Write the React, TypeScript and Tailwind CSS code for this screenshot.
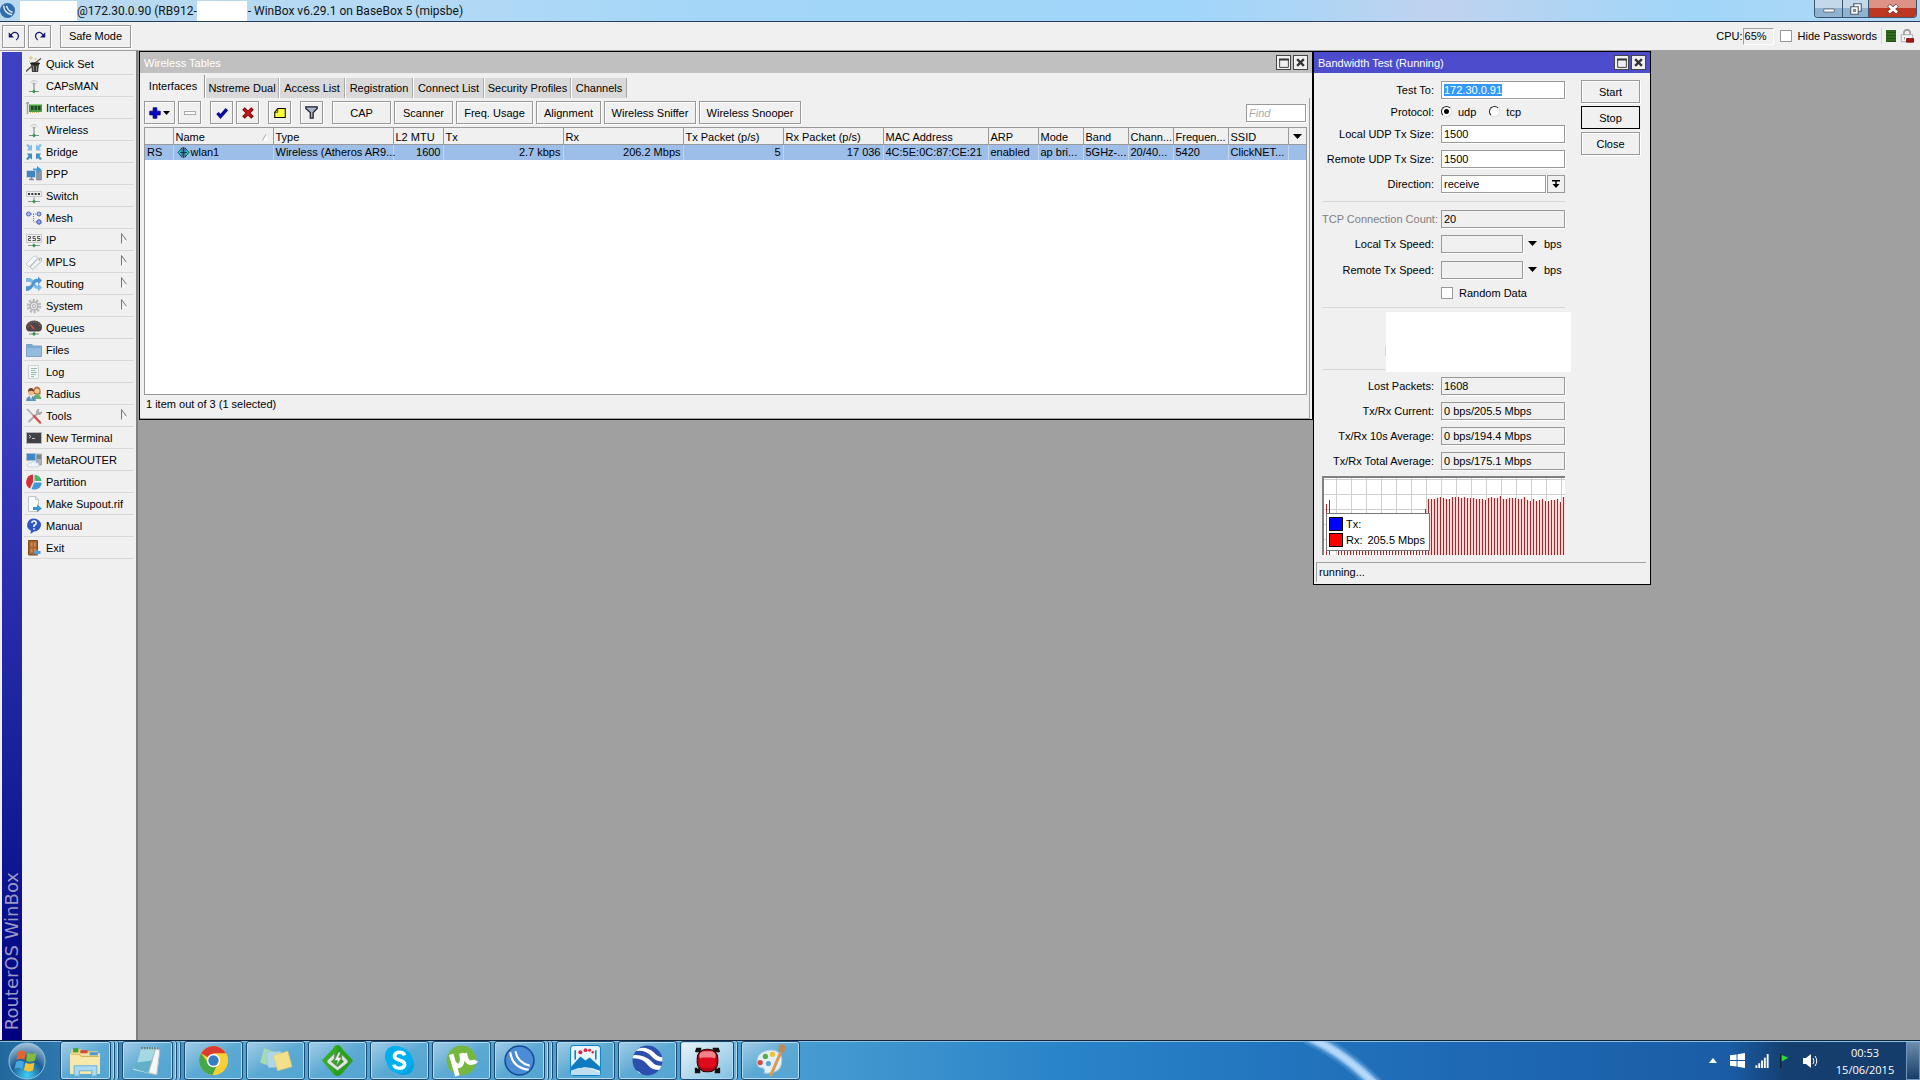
import React, { useEffect, useRef } from 'react';

interface MenuItem {
  label: string;
  icon: React.ReactNode;
  submenu?: boolean;
}

interface Column {
  title: string;
  value: React.ReactNode;
  width: string;
  right?: boolean;
}

const Icon: React.FC<{ children: React.ReactNode; className?: string }> = ({ children, className = 'size-4' }) => (
  <svg viewBox="0 0 16 16" className={`${className} shrink-0`} fill="none" aria-hidden="true">
    {children}
  </svg>
);

const antenna = (
  <Icon>
    <path d="M4.5 4.5Q8 .5 11.5 4.5M6 6Q8 4 10 6" stroke="#c2c5c4" />
    <path d="M8 5v8" stroke="#9a9f9c" strokeWidth="1.4" />
    <path d="M3 13.5h10" stroke="#7d8a80" />
    <path d="M6 13.5 8 11.5l2 2-2 2z" fill="#2e9a48" />
  </Icon>
);

const menuItems: MenuItem[] = [
  {
    label: 'Quick Set',
    icon: (
      <Icon>
        <path d="M5 8h8l-1 8H6z" fill="#3b3b3b" />
        <ellipse cx="9" cy="7.5" rx="5" ry="1.3" fill="#1e1e1e" />
        <path d="M7.5 10v5M10.500 10v5" stroke="#8a8a8a" />
        <path d="M0 15.500 7 9M9 7l6-4.500" stroke="#5b544a" strokeWidth="1.5" />
        <path d="M5 0v4M3 2h4M9.5 2v2M8.5 3h2M3 5.5h1.5" stroke="#e3c070" />
      </Icon>
    ),
  },
  { label: 'CAPsMAN', icon: antenna },
  {
    label: 'Interfaces',
    icon: (
      <Icon>
        <path d="M1.500 2v12M0 3h3" stroke="#9ba39b" strokeWidth="1.5" />
        <path d="M3 4h13v8H3z" fill="#4c9b45" />
        <path d="M5 6h2.500v4H5zM8.500 6H11v4H8.500zM12 6h2.500v4H12z" fill="#1f4a23" />
        <path d="M4 12.5h9" stroke="#c7b45c" strokeDasharray="1 1" />
        <path d="M3 4.5h13" stroke="#8fd085" />
      </Icon>
    ),
  },
  { label: 'Wireless', icon: antenna },
  {
    label: 'Bridge',
    icon: (
      <Icon>
        <path d="M0 1l2-1 2 2 2-1.500V6.500H1L2.500 4z" fill="#7cc0e4" />
        <path d="M16 1l-2-1-2 2-2-1.500V6.500h5L13.500 4z" fill="#7cc0e4" />
        <path d="M0 15l2 1 2-2 2 1.500V9.500H1L2.500 12z" fill="#3f8fc0" />
        <path d="M16 15l-2 1-2-2-2 1.500V9.500h5L13.500 12z" fill="#3f8fc0" />
      </Icon>
    ),
  },
  {
    label: 'PPP',
    icon: (
      <Icon>
        <path d="M10.500 4.500h5v9.500h-5z" fill="#8b98a3" stroke="#66727c" strokeWidth=".5" />
        <path d="M.5 4.500h9v7h-9z" fill="#3b86c6" stroke="#c7d2da" />
        <path d="M3 13.500h5M5.500 11v2" stroke="#7f8a92" strokeWidth="1.5" />
        <path d="M7 4V2.500h4V0l4.500 3.500L11 7V4.500z" fill="#3a9bdc" />
      </Icon>
    ),
  },
  {
    label: 'Switch',
    icon: (
      <Icon>
        <path d="M.5 3.5h15v5H.5z" fill="#efefef" stroke="#c9c9c9" />
        <path d="M2 6h12" stroke="#333" strokeWidth="2" strokeDasharray="2 1.3" />
        <path d="M2 13.5h12M8 9v3" stroke="#8d9a90" />
        <path d="M6 13.5 8 11.5l2 2-2 2z" fill="#2e9a48" />
      </Icon>
    ),
  },
  {
    label: 'Mesh',
    icon: (
      <Icon>
        <path d="M5 4h5M7.500 4v8H11" stroke="#777" strokeDasharray="1 1" />
        <circle cx="2.5" cy="4" r="2" fill="#aebcf0" stroke="#5064b4" />
        <circle cx="13" cy="4" r="2" fill="#aebcf0" stroke="#5064b4" />
        <circle cx="13" cy="12" r="2.2" fill="#8ea2ea" stroke="#3d50a4" />
      </Icon>
    ),
  },
  {
    label: 'IP',
    submenu: true,
    icon: (
      <Icon>
        <path d="M.5 2.5h15v8H.5z" fill="#eee" stroke="#c9c9c9" />
        <path d="M2 4.5h2.500v2H2.500v2h2.500M9.500 4.5H7v2h2.500v2H6.500M14 4.5h-2.500v2H14v2h-3" stroke="#555" />
        <path d="M2 13.5h12" stroke="#8d9a90" />
        <path d="M6 13.5 8 11.5l2 2-2 2z" fill="#2e9a48" />
      </Icon>
    ),
  },
  {
    label: 'MPLS',
    submenu: true,
    icon: (
      <Icon>
        <path d="M0 10 8 2h3v3l-8 8z" fill="#f6f8f8" stroke="#c4cdcf" />
        <path d="M4 13 12 4.500l3.500-.5v3L7 15.500z" fill="#edf2f2" stroke="#aebabc" />
        <circle cx="13.5" cy="6" r=".8" fill="#7e8f94" />
      </Icon>
    ),
  },
  {
    label: 'Routing',
    submenu: true,
    icon: (
      <Icon>
        <path d="M0 2h4q3 1 5 5 1 3 3 3V7.500l4 4-4 4V13q-4 0-6-5Q5 5 0 6z" fill="#79b9e6" />
        <path d="M0 10q4 1 6-3 2-5 6-4V.5l4 4-4 4V6Q9 6 8 9q-3 6-8 6z" fill="#4f95d3" />
      </Icon>
    ),
  },
  {
    label: 'System',
    submenu: true,
    icon: (
      <Icon>
        <circle cx="8" cy="8" r="5.8" stroke="#bcbcbc" strokeWidth="3" strokeDasharray="2.2 1.4" />
        <circle cx="8" cy="8" r="4" fill="#e2e2e2" stroke="#b0b0b0" strokeWidth="1.5" />
        <circle cx="8" cy="8" r="1.5" fill="#fff" stroke="#aaa" />
      </Icon>
    ),
  },
  {
    label: 'Queues',
    icon: (
      <Icon>
        <path d="M0 7a8 6.500 0 0 1 16 0q0 4-3 4.500H3Q0 11 0 7z" fill="#4e4646" />
        <path d="M2 7a6 5 0 0 1 12 0" stroke="#9b8f8f" strokeDasharray="1 1.5" />
        <path d="m8 9-3.500-4" stroke="#e4523e" strokeWidth="1.5" />
        <path d="M3 14h10M8 11v2" stroke="#7d8a80" />
        <path d="M6 14l2-2 2 2-2 2z" fill="#2e9a48" />
      </Icon>
    ),
  },
  {
    label: 'Files',
    icon: (
      <Icon>
        <path d="M.5 2.500H6l1.500 1.500h8v10.500H.5z" fill="#7fa9cd" stroke="#7ba3c6" />
        <path d="M1 6h14v8H1z" fill="#92bbdc" />
      </Icon>
    ),
  },
  {
    label: 'Log',
    icon: (
      <Icon>
        <path d="M2.500 1.500h10v13h-10z" fill="#f1f6f4" stroke="#cbd6d3" />
        <path d="M5 4.500h6M5 6.500h4M5 8.500h6M5 10.500h5M5 12.500h3" stroke="#9fb6b2" />
      </Icon>
    ),
  },
  {
    label: 'Radius',
    icon: (
      <Icon>
        <path d="M7 8q-.5-7 4-7.500 4.500.5 3.500 8z" fill="#bb6a2c" />
        <circle cx="11" cy="5" r="2.5" fill="#f2c59b" />
        <path d="M7 13q1-5 4-5t4.500 5z" fill="#68ad69" />
        <circle cx="5" cy="6.500" r="3" fill="#eab98b" />
        <path d="M2 6q0-4 3-4t3 4Q5 3.500 2 6z" fill="#6b4123" />
        <path d="M0 15q.5-5 5-5t5 5z" fill="#5b93bb" />
        <path d="M4 10h2l-1 4z" fill="#fff" />
      </Icon>
    ),
  },
  {
    label: 'Tools',
    submenu: true,
    icon: (
      <Icon>
        <path d="M2.500 14 12 5" stroke="#b0b0b0" strokeWidth="2" />
        <path d="M10.500 5.500a3 3 0 0 1 3-4.500l-1 2.500 1.500 1 2-1.500a3 3 0 0 1-5 3z" fill="#a8a8a8" />
        <path d="M1 1l7 7" stroke="#a9a9a9" strokeWidth="1.5" />
        <path d="m8 8 6 6.500" stroke="#d25050" strokeWidth="2.5" strokeLinecap="round" />
      </Icon>
    ),
  },
  {
    label: 'New Terminal',
    icon: (
      <Icon>
        <path d="M.5 2.500h15v11H.5z" fill="#3f4146" stroke="#b5b5b8" />
        <path d="m3 5 2 1.500L3 8M6 8.500h3" stroke="#e5e5e5" strokeWidth=".8" />
      </Icon>
    ),
  },
  {
    label: 'MetaROUTER',
    icon: (
      <Icon>
        <path d="M10.500 2h5v11h-5z" fill="#a9b3bb" stroke="#7c8993" strokeWidth=".6" />
        <path d="M11 4h4M11 6h4" stroke="#4b565f" />
        <path d="M.5 1.500h9v7h-9z" fill="#3c88cb" stroke="#a9bccb" />
        <path
          d="M3 15Q.5 14.500 1.500 12 3 10 5 11q2-3 4.500-.5 3.500 0 3.500 2.500 0 2-2 2z"
          fill="#eef3f8"
          stroke="#b8c6d2"
          strokeWidth=".7"
        />
      </Icon>
    ),
  },
  {
    label: 'Partition',
    icon: (
      <Icon>
        <path d="M7 8 4 14.500A7.500 7.500 0 0 1 7 .5z" fill="#d4303c" />
        <path d="M8.500 7V.8A7.200 7.200 0 0 1 15.500 7z" fill="#4bb36d" />
        <path d="M8.200 8.500h7.500A7.300 7.300 0 0 1 5.500 15z" fill="#3f97d6" />
      </Icon>
    ),
  },
  {
    label: 'Make Supout.rif',
    icon: (
      <Icon>
        <path d="M2.500.5h7l3 3v12h-10z" fill="#f8fbfa" stroke="#bcc8c5" />
        <path d="M9.500.5v3h3" stroke="#bcc8c5" />
        <path d="M7 11h4V8.500l5 4-5 3.500V14H7z" fill="#3b95d3" />
      </Icon>
    ),
  },
  {
    label: 'Manual',
    icon: (
      <Icon>
        <path d="M8 .5a7 6.500 0 0 1 0 13l-3.500 2.500.5-3.200A7 6.500 0 0 1 8 .5z" fill="#3058c4" />
        <path d="M5.800 5q.2-2 2.200-2t2.200 2Q10.200 6.300 8 7.500V9M8 10.200v1.600" stroke="#fff" strokeWidth="1.5" />
      </Icon>
    ),
  },
  {
    label: 'Exit',
    icon: (
      <Icon>
        <path d="M2.500.5h9v14.500h-9z" fill="#a8622d" stroke="#7d4a22" />
        <path d="M4.500 2.500h2v4h-2zM7.800 2.500h2v4h-2zM4.500 8.500h2v4h-2zM7.800 8.500h2v4h-2z" fill="#cd8a4e" />
        <path d="M14.500 11h-3V9L7.500 12.500l4 3V14h3z" fill="#4a9fdc" />
      </Icon>
    ),
  },
];

const tabs = [
  { label: 'Interfaces', width: 'w-[63px]' },
  { label: 'Nstreme Dual', width: 'w-[74px]' },
  { label: 'Access List', width: 'w-[66px]' },
  { label: 'Registration', width: 'w-[68px]' },
  { label: 'Connect List', width: 'w-[71px]' },
  { label: 'Security Profiles', width: 'w-[87px]' },
  { label: 'Channels', width: 'w-[56px]' },
];

const toolButtons = [
  { label: 'CAP', width: 'w-[59px]' },
  { label: 'Scanner', width: 'w-[59px]' },
  { label: 'Freq. Usage', width: 'w-[77px]' },
  { label: 'Alignment', width: 'w-[65px]' },
  { label: 'Wireless Sniffer', width: 'w-[92px]' },
  { label: 'Wireless Snooper', width: 'w-[102px]' },
];

const columns: Column[] = [
  { title: '', value: 'RS', width: 'w-[28px]' },
  {
    title: 'Name',
    width: 'w-[100px]',
    value: (
      <span className="flex items-center gap-px pl-px">
        <Icon className="h-[11px] w-[13px]">
          <path d="M0 8l6-7v14zM16 8l-6-7v14z" fill="#22d3dc" stroke="#0a2a3a" strokeWidth="1.2" />
          <path d="M8 0v16" stroke="#0a2a3a" strokeWidth="1.2" />
          <path d="M3 8h10" stroke="#0a2a3a" strokeWidth="1.2" />
        </Icon>
        wlan1
      </span>
    ),
  },
  { title: 'Type', value: 'Wireless (Atheros AR9...', width: 'w-[120px]' },
  { title: 'L2 MTU', value: '1600', width: 'w-[50px]', right: true },
  { title: 'Tx', value: '2.7 kbps', width: 'w-[120px]', right: true },
  { title: 'Rx', value: '206.2 Mbps', width: 'w-[120px]', right: true },
  { title: 'Tx Packet (p/s)', value: '5', width: 'w-[100px]', right: true },
  { title: 'Rx Packet (p/s)', value: '17 036', width: 'w-[100px]', right: true },
  { title: 'MAC Address', value: '4C:5E:0C:87:CE:21', width: 'w-[105px]' },
  { title: 'ARP', value: 'enabled', width: 'w-[50px]' },
  { title: 'Mode', value: 'ap bri...', width: 'w-[45px]' },
  { title: 'Band', value: '5GHz-...', width: 'w-[45px]' },
  { title: 'Chann...', value: '20/40...', width: 'w-[45px]' },
  { title: 'Frequen...', value: '5420', width: 'w-[55px]' },
  { title: 'SSID', value: 'ClickNET...', width: 'w-[60px]' },
];

const results = [
  { id: 'lost', label: 'Lost Packets:', value: '1608' },
  { id: 'current', label: 'Tx/Rx Current:', value: '0 bps/205.5 Mbps' },
  { id: 'avg10', label: 'Tx/Rx 10s Average:', value: '0 bps/194.4 Mbps' },
  { id: 'total', label: 'Tx/Rx Total Average:', value: '0 bps/175.1 Mbps' },
];

// Rx samples, top edge of each bar in the plot
const rxTops = [
  21, 21, 21, 20, 19, 20, 21, 21, 19, 19, 19, 20, 19, 20, 20, 20, 21, 21, 21, 22, 20, 19, 20, 20, 18, 21, 21, 20, 20,
  20, 21, 21, 19, 22, 23, 21, 23, 22, 21, 23, 23, 22, 22, 21, 24, 19,
];

const buttonStyle =
  'flex h-[23px] items-center justify-center whitespace-nowrap border border-[#999] bg-[#f0f0f0] shadow-[inset_1px_1px_0_#fff,1px_1px_0_#fff]';
const fieldStyle = 'h-[18px] min-w-0 border border-[#999] bg-white px-[2px] outline-none shadow-[1px_1px_0_#fff]';
const disabledField = 'h-[18px] min-w-0 border border-[#999] bg-[#f0f0f0] px-[2px] outline-none shadow-[1px_1px_0_#fff]';

const WindowButtons: React.FC = () => (
  <div className="flex gap-[2px]">
    <button
      aria-label="Maximize"
      className="flex size-[15px] items-center justify-center border border-[#444] bg-[#f0f0f0]"
    >
      <Icon className="size-[10px]">
        <path d="M1 2h14v13H1z" stroke="#444" strokeWidth="1.6" />
        <path d="M0 2.500h16" stroke="#333" strokeWidth="3" />
      </Icon>
    </button>
    <button
      aria-label="Close window"
      className="flex size-[15px] items-center justify-center border border-[#444] bg-[#f0f0f0]"
    >
      <Icon className="size-[9px]">
        <path d="m2 2 12 12M14 2 2 14" stroke="#333" strokeWidth="4" />
      </Icon>
    </button>
  </div>
);

const Down: React.FC = () => (
  <svg viewBox="0 0 9 5" className="h-[5px] w-[9px]" aria-hidden="true">
    <path d="M0 0h9L4.500 5z" fill="#000" />
  </svg>
);

const TitleBar: React.FC = () => (
  <header className="flex h-[22px] shrink-0 border-b border-[#26405c] bg-[linear-gradient(90deg,#b9d9ee_0,#b5daf4_20%,#a3d6f8_38%,#a0d6fa_62%,#bfd3ef_75%,#a0d6f8_88%,#b4d8f4)] font-['Roboto','Noto_Sans',sans-serif] text-xs text-[#101418]">
    <Icon className="mt-[3px] size-[15px]">
      <circle cx="8" cy="8" r="8" fill="#2f6cab" />
      <path d="M4 3q0 8 9 9.500M7 3q1 5 6.500 7" stroke="#e3effa" strokeWidth="1.5" />
    </Icon>
    <span className="ml-[5px] mt-px w-[57px] bg-white" />
    <span className="whitespace-nowrap leading-[22px]">@172.30.0.90 (RB912-</span>
    <span className="mt-px h-[20px] w-[50px] bg-white" />
    <h1 className="ml-px whitespace-nowrap leading-[22px]">- WinBox v6.29.1 on BaseBox 5 (mipsbe)</h1>
    <div className="ml-auto mr-[3px] flex h-[18px] overflow-hidden rounded-b border border-t-0 border-[#3c536e]">
      <button
        aria-label="Minimize"
        className="flex w-[28px] items-center justify-center border-r border-[#3c536e] bg-linear-to-b from-[#c3d8e9] from-50% to-[#8fb2cf] to-50%"
      >
        <Icon className="size-3">
          <path d="M1 8h14v4H1z" fill="#fff" stroke="#4b5a69" />
        </Icon>
      </button>
      <button
        aria-label="Restore"
        className="flex w-[26px] items-center justify-center border-r border-[#3c536e] bg-linear-to-b from-[#c3d8e9] from-50% to-[#8fb2cf] to-50%"
      >
        <Icon className="size-3">
          <path d="M5 1h10v10H5z" stroke="#4b5a69" strokeWidth="1.5" fill="#fff" />
          <path d="M1 5h10v10H1z" fill="#fff" stroke="#4b5a69" strokeWidth="1.5" />
          <path d="M4.500 8.500h3v3h-3z" stroke="#4b5a69" fill="#9ab7cf" />
        </Icon>
      </button>
      <button
        aria-label="Close"
        className="flex w-[47px] items-center justify-center bg-linear-to-b from-[#dd9285] from-50% to-[#bd3722] to-50%"
      >
        <Icon className="size-3">
          <path d="m2 3 12 10M14 3 2 13" stroke="#5b3a3a" strokeWidth="5.5" />
          <path d="m2.500 3.500 11 9M13.500 3.500l-11 9" stroke="#fff" strokeWidth="3.5" />
        </Icon>
      </button>
    </div>
  </header>
);

const Toolbar: React.FC = () => (
  <div className="flex h-[28px] shrink-0 items-center bg-[#f0f0f0] px-[2px]">
    <button aria-label="Undo" className={`${buttonStyle} w-[23px]`}>
      <Icon className="size-3">
        <path d="M4 6.500Q8 1 12.500 4.500 16 9 11 13.500" stroke="#15156c" strokeWidth="1.6" />
        <path d="M1 3v7h7z" fill="#15156c" />
      </Icon>
    </button>
    <button aria-label="Redo" className={`${buttonStyle} ml-[3px] w-[23px]`}>
      <Icon className="size-3">
        <path d="M12 6.500Q8 1 3.500 4.500 0 9 5 13.500" stroke="#15156c" strokeWidth="1.6" />
        <path d="M15 3v7H8z" fill="#15156c" />
      </Icon>
    </button>
    <button className={`${buttonStyle} ml-[9px] w-[71px]`}>Safe Mode</button>
    <span className="ml-auto">CPU:</span>
    <span className="mr-[6px] h-[17px] w-[31px] border border-[#a0a0a0] border-r-white border-b-white pl-px leading-[15px]">
      65%
    </span>
    <input id="hide" type="checkbox" className="size-3 appearance-none border border-[#999] bg-white" />
    <label htmlFor="hide" className="ml-[6px]">
      Hide Passwords
    </label>
    <span className="ml-[4px] mr-[4px] h-4 w-px bg-[#d5d5d5]" />
    <span className="h-3 w-[10px] bg-[repeating-linear-gradient(#2f6a1c_0_2px,#235512_2px_3px)]" />
    <Icon className="ml-[4px] mr-[4px] size-[14px]">
      <path d="M4.500 7V4q0-3 3.500-3t3.500 3v3" stroke="#9a9a9a" strokeWidth="1.8" />
      <path d="M1.500 6.500h13v8h-13z" fill="#f5f5f5" stroke="#a5a5a5" />
      <path d="M4.500 9h1v3h-1z" fill="#888" />
      <path d="M7.500 11h8v4h-8z" fill="#b21616" stroke="#700" />
    </Icon>
  </div>
);

const Sidebar: React.FC = () => (
  <aside className="flex w-[138px] shrink-0 border-t border-r-2 border-t-[#a0a0a0] border-r-[#808080] bg-[#f0f0f0] pl-[2px] pt-px">
    <div className="flex w-5 items-end justify-center bg-linear-to-b from-[#4040c4] from-30% to-[#000080]">
      <span className="mb-[10px] rotate-180 whitespace-nowrap font-['DejaVu_Sans',sans-serif] text-lg leading-5 text-[#9a9ac4] [writing-mode:vertical-rl]">
        RouterOS WinBox
      </span>
    </div>
    <nav className="flex flex-1 flex-col px-[2px] pt-px">
      {menuItems.map((item) => (
        <button
          key={item.label}
          className="flex h-[22px] items-center gap-[4px] border-b border-[#d8d8d8] pl-[2px] pr-[7px] text-left"
        >
          {item.icon}
          <span className="flex-1 whitespace-nowrap">{item.label}</span>
          {item.submenu && (
            <svg viewBox="0 0 6 11" className="mb-[3px] h-[11px] w-[6px]" aria-hidden="true">
              <path d="M.5 11V.5L5.500 7.500" stroke="#777" fill="none" />
              <path d="M5.500 7.500.5 10.500" stroke="#fff" />
            </svg>
          )}
        </button>
      ))}
    </nav>
  </aside>
);

const WirelessTables: React.FC = () => (
  <section className="absolute left-px top-px flex h-[369px] w-[1174px] flex-col border border-black bg-[#f0f0f0]">
    <div className="flex h-[21px] shrink-0 items-center justify-between bg-[#c0c0c0] px-[4px] text-white">
      <h2>Wireless Tables</h2>
      <WindowButtons />
    </div>
    <div className="flex h-[25px] shrink-0 items-end px-[2px]">
      {tabs.map((tab, i) => (
        <button
          key={tab.label}
          className={`${tab.width} whitespace-nowrap ${
            i === 0 ? 'h-[23px] border-r border-[#999] pb-px' : 'h-5 border-l border-r border-r-[#aaa] border-l-white bg-[#d9d9d9]'
          }`}
        >
          {tab.label}
        </button>
      ))}
    </div>
    <div className="mr-[2px] flex flex-1 flex-col border-r border-b border-[#a0a0a0] pl-[4px] pr-[2px]">
      <div className="flex h-[29px] shrink-0 items-center gap-[3px]">
        <button aria-label="Add" className={`${buttonStyle} w-[31px] gap-[2px]`}>
          <Icon className="size-3">
            <path d="M5.500 1h5v4.500H15v5h-4.500V15h-5v-4.500H1v-5h4.500z" fill="#0808c8" stroke="#000050" />
          </Icon>
          <svg viewBox="0 0 7 4" className="h-1 w-[7px]" aria-hidden="true">
            <path d="M0 0h7L3.500 4z" fill="#000" />
          </svg>
        </button>
        <button aria-label="Remove" className={`${buttonStyle} w-[23px]`}>
          <span className="h-1 w-3 border border-[#aaa] bg-white" />
        </button>
        <button aria-label="Enable" className={`${buttonStyle} ml-[6px] w-[23px]`}>
          <Icon className="size-3">
            <path d="m2 8 4 4.500L14.500 3" stroke="#0a0a9c" strokeWidth="4.5" />
          </Icon>
        </button>
        <button aria-label="Disable" className={`${buttonStyle} w-[23px]`}>
          <Icon className="size-3">
            <path d="m2 2 12 12M14 2 2 14" stroke="#6c0808" strokeWidth="5" />
            <path d="m3 3 10 10M13 3 3 13" stroke="#c81414" strokeWidth="3" />
          </Icon>
        </button>
        <button aria-label="Comment" className={`${buttonStyle} ml-[6px] w-[23px]`}>
          <Icon className="h-3 w-[14px]">
            <path d="M1 7l4-5h10v12H1z" fill="#ffff3c" stroke="#000" strokeWidth="1.4" />
            <path d="M1 7h4V3" stroke="#000" />
          </Icon>
        </button>
        <button aria-label="Filter" className={`${buttonStyle} ml-[6px] w-[23px]`}>
          <Icon className="size-[13px]">
            <path d="M1 1h14v2L10 8v7H6.500V8L1 3z" fill="#a8b4cc" stroke="#1b1b26" strokeWidth="1.5" />
          </Icon>
        </button>
        {toolButtons.map((btn, i) => (
          <button key={btn.label} className={`${buttonStyle} ${btn.width} ${i === 0 ? 'ml-[6px]' : ''}`}>
            {btn.label}
          </button>
        ))}
        <input
          aria-label="Find"
          placeholder="Find"
          className={`${fieldStyle} ml-auto mr-px w-[60px] italic placeholder:text-[#aaa]`}
        />
      </div>
      <div className="flex-1 border border-[#999] bg-white">
        <table className="w-full table-fixed border-collapse whitespace-nowrap">
          <thead>
            <tr className="bg-[#f0f0f0] text-left">
              {columns.map((col) => (
                <th
                  key={col.title}
                  className={`${col.width} border-r border-b border-[#999] px-[2px] pt-[3px] font-normal leading-[13px]`}
                >
                  {col.title === 'Name' ? (
                    <span className="flex items-center justify-between">
                      Name
                      <Icon className="mr-[2px] size-[7px]">
                        <path d="M1 15 9 1l6 14z" fill="#fff" />
                        <path d="M1 15 9 1" stroke="#999" strokeWidth="2" />
                      </Icon>
                    </span>
                  ) : (
                    col.title
                  )}
                </th>
              ))}
              <th className="border-b border-[#999] pl-[4px]">
                <button aria-label="Choose columns" className="block">
                  <Down />
                </button>
              </th>
            </tr>
          </thead>
          <tbody>
            <tr className="bg-[#9dbee8]">
              {columns.map((col) => (
                <td
                  key={col.title}
                  className={`border-r border-[#c5d6ec] px-[2px] leading-[15px] ${col.right ? 'text-right' : 'text-left'}`}
                >
                  {col.value}
                </td>
              ))}
              <td />
            </tr>
          </tbody>
        </table>
      </div>
      <p className="h-[23px] shrink-0 pl-[2px] leading-[18px]">1 item out of 3 (1 selected)</p>
    </div>
  </section>
);

const Row: React.FC<{
  label: string;
  id?: string;
  dim?: boolean;
  className?: string;
  children: React.ReactNode;
}> = ({ label, id, dim, className = 'h-[25px]', children }) => (
  <div className={`flex items-center ${className}`}>
    <label
      htmlFor={id}
      className={`w-[112px] shrink-0 whitespace-nowrap text-right ${dim ? 'text-[#808080]' : ''}`}
    >
      {label}
    </label>
    <div className="ml-[7px] flex flex-1 items-center">{children}</div>
  </div>
);

const TrafficChart: React.FC = () => (
  <div className="relative mt-[3px] h-[79px] border-t-2 border-l-2 border-[#808080] bg-white">
    <svg
      viewBox="0 0 241 77"
      preserveAspectRatio="none"
      className="h-full w-full"
      shapeRendering="crispEdges"
      aria-label="Traffic"
    >
      {Array.from({ length: 16 }, (_, i) => (
        <path key={`v${i}`} d={`M${12.5 + i * 15} 0V77`} stroke="#cfcfcf" />
      ))}
      {Array.from({ length: 5 }, (_, i) => (
        <path key={`h${i}`} d={`M0 ${1.5 + i * 15}H241`} stroke="#cfcfcf" />
      ))}
      <path d="M2.500 26V77M5.500 22V77M101.500 31V77" stroke="#a02828" />
      {Array.from({ length: 29 }, (_, i) => (
        <path key={`b${i}`} d={`M${14.5 + i * 3} 72V77`} stroke="#a02828" />
      ))}
      {rxTops.map((top, i) => (
        <g key={i}>
          <rect x={103 + i * 3} y={top} width="3" height={77 - top} fill="#fbdada" />
          <path d={`M${104.5 + i * 3} ${top}V77`} stroke="#a02828" />
        </g>
      ))}
    </svg>
    <div className="absolute left-[2px] top-[35px] flex h-[38px] w-[104px] flex-col justify-center gap-[2px] border border-[#777] bg-white pl-[2px]">
      <div className="flex items-center gap-[3px] leading-[14px]">
        <span className="size-[14px] border border-black bg-[#0000ff]" />
        Tx:
      </div>
      <div className="flex items-center gap-[3px] leading-[14px]">
        <span className="size-[14px] border border-black bg-[#ff0000]" />
        Rx:<span className="ml-[2px]">205.5 Mbps</span>
      </div>
    </div>
  </div>
);

const BandwidthTest: React.FC = () => {
  const testTo = useRef<HTMLInputElement>(null);

  useEffect(() => {
    testTo.current?.focus();
    testTo.current?.select();
  }, []);

  return (
    <section className="absolute left-[1175px] top-px flex w-[338px] flex-col border border-black bg-[#f0f0f0]">
      <div className="flex h-[21px] items-center justify-between bg-[#4c4ccc] px-[4px] text-white">
        <h2>Bandwidth Test (Running)</h2>
        <WindowButtons />
      </div>
      <div className="flex gap-[16px] pl-[8px] pt-[4px]">
        <form className="w-[243px]">
          <Row label="Test To:" id="test-to">
            <input
              id="test-to"
              ref={testTo}
              defaultValue="172.30.0.91"
              className={`${fieldStyle} w-full selection:bg-[#3399ff] selection:text-white`}
            />
          </Row>
          <Row label="Protocol:" className="h-[19px]">
            <input
              id="udp"
              type="radio"
              name="protocol"
              defaultChecked
              className="size-[11px] appearance-none rounded-full border border-[#222] border-r-[#ddd] border-b-[#ddd] bg-white checked:bg-[radial-gradient(circle,#000_0_2px,#fff_3px)]"
            />
            <label htmlFor="udp" className="ml-[6px] mr-[13px]">
              udp
            </label>
            <input
              id="tcp"
              type="radio"
              name="protocol"
              className="size-[11px] appearance-none rounded-full border border-[#222] border-r-[#ddd] border-b-[#ddd] bg-white"
            />
            <label htmlFor="tcp" className="ml-[6px]">
              tcp
            </label>
          </Row>
          <Row label="Local UDP Tx Size:" id="local-size">
            <input id="local-size" defaultValue="1500" className={`${fieldStyle} w-full`} />
          </Row>
          <Row label="Remote UDP Tx Size:" id="remote-size">
            <input id="remote-size" defaultValue="1500" className={`${fieldStyle} w-full`} />
          </Row>
          <Row label="Direction:" id="direction">
            <select id="direction" defaultValue="receive" className={`${fieldStyle} w-[105px] appearance-none`}>
              <option>receive</option>
              <option>send</option>
              <option>both</option>
            </select>
            <button
              type="button"
              aria-label="Open direction list"
              className="ml-px flex h-[18px] w-[18px] items-center justify-center border border-[#999]"
            >
              <Icon className="size-2">
                <path d="M0 1.500h16M8 2v8" stroke="#000" strokeWidth="3" />
                <path d="M1 8h14l-7 8z" fill="#000" />
              </Icon>
            </button>
          </Row>
          <hr className="mb-[4px] mt-[5px] border-[#d8d8d8]" />
          <Row label="TCP Connection Count:" id="tcp-count" dim>
            <input id="tcp-count" readOnly value="20" className={`${disabledField} w-full`} />
          </Row>
          <Row label="Local Tx Speed:" id="local-speed">
            <input id="local-speed" readOnly className={`${disabledField} w-[82px]`} />
            <button type="button" aria-label="Local speed options" className="ml-[5px]">
              <Down />
            </button>
            <span className="ml-[7px]">bps</span>
          </Row>
          <Row label="Remote Tx Speed:" id="remote-speed" className="h-[27px]">
            <input id="remote-speed" readOnly className={`${disabledField} w-[82px]`} />
            <button type="button" aria-label="Remote speed options" className="ml-[5px]">
              <Down />
            </button>
            <span className="ml-[7px]">bps</span>
          </Row>
          <div className="ml-[119px] flex h-5 items-center gap-[6px]">
            <input id="random" type="checkbox" className="size-3 appearance-none border border-[#999] bg-white" />
            <label htmlFor="random">Random Data</label>
          </div>
          <div className="mt-[4px] h-[63px] border-t border-b border-[#d8d8d8] pl-[63px] pt-[4px]">
            <div className="flex h-[60px] w-[186px]">
              <span className="mt-[34px] h-[10px] w-px bg-[#e6d9a8]" />
              <span className="flex-1 bg-white" />
            </div>
          </div>
          <div className="pt-[3px]">
            {results.map((r) => (
              <Row key={r.id} label={r.label} id={r.id}>
                <input id={r.id} readOnly value={r.value} className={`${disabledField} w-full`} />
              </Row>
            ))}
          </div>
          <TrafficChart />
        </form>
        <div className="flex w-[59px] flex-col gap-[3px] pt-[3px]">
          <button className={`${buttonStyle} w-full`}>Start</button>
          <button className="flex h-[23px] w-full items-center justify-center border border-black">Stop</button>
          <button className={`${buttonStyle} w-full`}>Close</button>
        </div>
      </div>
      <p className="mb-[2px] ml-[2px] mr-[4px] mt-[7px] h-5 border-t border-l border-[#a0a0a0] pl-[2px] leading-[18px]">
        running...
      </p>
    </section>
  );
};

interface TaskApp {
  name: string;
  icon: React.ReactNode;
  stack?: number;
  active?: boolean;
}

const TaskIcon: React.FC<{ children: React.ReactNode }> = ({ children }) => (
  <svg viewBox="0 0 32 32" className="size-[33px]" fill="none" aria-hidden="true">
    {children}
  </svg>
);

const apps: TaskApp[] = [
  {
    name: 'Explorer',
    stack: 2,
    icon: (
      <TaskIcon>
        <path d="M2 5h10l1 2h15v4l2 1v17H2z" fill="#e9cf7c" />
        <path d="M1 9h29v20H1z" fill="#f8e8ab" />
        <path d="M4 4h5v4H4z" fill="#35a435" />
        <path d="M11 6h7v3h-7z" fill="#d34d35" />
        <path d="M20 8h8v3h-8z" fill="#489bd6" />
        <path d="M2 10h8l2 2h17" stroke="#d3b55b" />
        <path d="M5 31V21h22v10h-5v-5H10v5z" fill="#a9daf2" stroke="#69b5dc" />
      </TaskIcon>
    ),
  },
  {
    name: 'Notepad',
    stack: 2,
    icon: (
      <TaskIcon>
        <path d="m10 4 16-1-1 27-9-2-14-3z" fill="#d7e9ee" />
        <path d="M10 4h14l-7 24-15-4z" fill="#63b1c7" />
        <path d="M10 4h14l-4 12-14 2z" fill="#a4d8e3" />
        <path d="M24 4 17 28l8 2 3-24z" fill="#f7f8f6" stroke="#afbabd" />
        <path d="M10 4h16" stroke="#677" strokeWidth="2" strokeDasharray="1.5 1" />
      </TaskIcon>
    ),
  },
  {
    name: 'Chrome',
    icon: (
      <TaskIcon>
        <circle cx="16" cy="16" r="14" fill="#f8cf35" />
        <path d="M16 16 3.900 9A14 14 0 0 1 28.100 9z" fill="#db3b31" />
        <path d="M3.900 9A14 14 0 0 0 15 30l5-11-8 1z" fill="#45a64a" />
        <path d="M28 9H16v7h6l-6 14A14 14 0 0 0 28 9z" fill="#f8cf35" />
        <circle cx="16" cy="16" r="6.500" fill="#fff" />
        <circle cx="16" cy="16" r="5" fill="#397cc4" />
      </TaskIcon>
    ),
  },
  {
    name: 'Sticky Notes',
    icon: (
      <TaskIcon>
        <path d="m5 4 14 5-4 14-14-5z" fill="#a7dcae" />
        <path d="m7 8 14-1 1 15-13 1z" fill="#b0d6ee" stroke="#8cc0df" strokeWidth=".5" />
        <path d="m14 11 14-4 4 15-14 4z" fill="#f3e08b" stroke="#dfc65f" strokeWidth=".5" />
      </TaskIcon>
    ),
  },
  {
    name: 'Downloader',
    icon: (
      <TaskIcon>
        <path d="M16 1q3 0 5 4l10 11-11 13q-4 4-8 0L1 16 12 4q1-3 4-3z" fill="#35ad20" />
        <path d="m16 1 15 15-11 13q-4 4-8 0z" fill="#188d12" opacity=".4" />
        <path
          d="M13 9 6 16q-1 2 1 3l9 7 9-7q2-1 1-3l-6-6v5l2 2-6 5-6-5 3-3z"
          fill="#dfe8dc"
          stroke="#68806a"
          strokeWidth=".7"
        />
        <path d="m17 8-4 8h3l-1 5 5-8h-3l2-5z" fill="#eef3ec" stroke="#68806a" strokeWidth=".5" />
      </TaskIcon>
    ),
  },
  {
    name: 'Skype',
    icon: (
      <TaskIcon>
        <rect x="2" y="2" width="20" height="20" rx="9" fill="#00aff0" />
        <rect x="10" y="10" width="20" height="20" rx="9" fill="#00a2e0" />
        <circle cx="16" cy="16" r="12.500" fill="#00aff0" />
        <path d="M21 11q-1-3-5-3t-5 3.500q0 3 5 4.200t5 4.300q-.5 3.500-5 3.500t-5.500-3.500" stroke="#fff" strokeWidth="3.5" />
      </TaskIcon>
    ),
  },
  {
    name: 'uTorrent',
    icon: (
      <TaskIcon>
        <circle cx="16" cy="16" r="14.500" fill="#76b83f" />
        <path d="m6 10 6 21M9 18q1 4 5 3 4-2 2-12M19 9q2 10 6 9 4 0 5-2" stroke="#fff" strokeWidth="4.5" />
      </TaskIcon>
    ),
  },
  {
    name: 'WinBox',
    stack: 2,
    icon: (
      <TaskIcon>
        <circle cx="16" cy="16" r="14" fill="#4a8cd6" stroke="#174a96" strokeWidth="1.5" />
        <path d="M7 8q2 15 18 17M12 7q2 11 14 14" stroke="#fff" strokeWidth="2" />
      </TaskIcon>
    ),
  },
  {
    name: 'Radio Mobile',
    icon: (
      <TaskIcon>
        <rect x="1.500" y="1.500" width="29" height="29" rx="3" fill="#e9f5fb" stroke="#0b84c6" />
        <path d="m2 22 9-10 5 4 4-3 10 9v4q-14-7-28 0z" fill="#0d7dc0" />
        <path d="M2 26q14-7 28 2v2H2z" fill="#bfdff1" />
        <path d="M6 6v9M26 6v9" stroke="#0d7dc0" strokeWidth="1.5" />
        <g fill="#d7263d">
          <circle cx="11" cy="8" r="2" />
          <circle cx="16" cy="6" r="1.800" />
          <circle cx="20" cy="6" r="1.400" />
          <circle cx="23" cy="8" r="1.200" />
        </g>
      </TaskIcon>
    ),
  },
  {
    name: 'Google Earth',
    icon: (
      <TaskIcon>
        <defs>
          <clipPath id="globe">
            <circle cx="16" cy="16" r="14.500" />
          </clipPath>
        </defs>
        <circle cx="16" cy="16" r="14.500" fill="#2c4fae" />
        <g clipPath="url(#globe)">
          <path d="M3 7q11-2 17 5 4 5 12 5v-4q-6 0-10-5Q14 1 5 5z" fill="#fff" />
          <path d="M0 14q11-1 17 7 4 5 14 4v-4q-7 1-11-4Q12 9 0 11z" fill="#fff" />
          <path d="M3 26q5-1 9 6H5z" fill="#fff" />
        </g>
      </TaskIcon>
    ),
  },
  {
    name: 'Bandwidth Monitor',
    active: true,
    stack: 1,
    icon: (
      <TaskIcon>
        <path
          d="m5 8 1-3h4M21 5h5l1 3M5 23v4h4M27 23v4h-4M6 5l4 4M26 5l-4 4M6 27l4-5M26 27l-4-5"
          stroke="#101010"
          strokeWidth="2.5"
        />
        <rect x="6" y="5" width="20" height="22" rx="9" fill="#b10516" stroke="#300" />
        <rect x="8" y="7" width="16" height="9" rx="5" fill="#f0838a" />
        <rect x="8" y="13" width="16" height="10" rx="4" fill="#e00a1d" />
      </TaskIcon>
    ),
  },
  {
    name: 'Paint',
    icon: (
      <TaskIcon>
        <path
          d="M3 19Q2 8 14 6q12-1 13 9 0 10-7 12-6 2-10 1 1-5-3-5-3 0-4-4z"
          fill="#e4f0f6"
          stroke="#a8c9db"
        />
        <circle cx="6" cy="18" r="2.500" fill="#d9453c" />
        <circle cx="11" cy="12" r="2.600" fill="#54ae49" />
        <circle cx="18" cy="10" r="2.600" fill="#f0c13a" />
        <circle cx="14" cy="19" r="2.500" fill="#55a7d8" />
        <path d="M26 8 16 31" stroke="#dc9a55" strokeWidth="3" />
        <path d="M24 1q5-2 7 2l-2 6-5-2z" fill="#bd8a56" />
      </TaskIcon>
    ),
  },
];

const Taskbar: React.FC = () => (
  <footer className="flex h-10 shrink-0 border-t border-[#10243c] bg-[linear-gradient(90deg,#22689f_0,#4fa3d4_12%,#4a9fd2_40%,#2a84c8_55%,#2276be_66%,#1f69b4_76%,#1a5da6_90%,#153f70_93%,#153c6a)] shadow-[inset_0_1px_0_#8cc0e0]">
    <button aria-label="Start menu" className="flex w-[60px] items-center pl-[8px]">
      <svg viewBox="0 0 38 38" className="size-[38px]" aria-hidden="true">
        <defs>
          <radialGradient id="orb" cx=".5" cy=".9" r=".9">
            <stop offset="0" stopColor="#3fd0f5" />
            <stop offset=".5" stopColor="#1b5c93" />
            <stop offset="1" stopColor="#a9c5d8" />
          </radialGradient>
        </defs>
        <circle cx="19" cy="19" r="18" fill="url(#orb)" stroke="#8fc6e2" />
        <path d="M10 10q4-3 8 0l-1.500 8q-4-2.500-8 0z" fill="#e8622a" />
        <path d="M19.500 10.500q4 2.500 9 0l-1.500 8q-5 2.500-9 0z" fill="#85bb3c" />
        <path d="M8 20q4-3 8 0l-1.500 7q-4-2.500-8 0z" fill="#48a6e0" />
        <path d="M17.500 20.500q4 2.500 9 0l-1.500 8q-5 2-9-.5z" fill="#f6c335" />
      </svg>
    </button>
    <div className="flex gap-[3px]">
      {apps.map((app) => (
        <div key={app.name} className="flex">
          <button
            aria-label={app.name}
            className={`flex h-[39px] items-center justify-center rounded-[3px] border border-[#1c4a70] shadow-[inset_0_0_0_1px_#b4dbef] ${
              app.active
                ? 'bg-linear-to-br from-[#eaf4fa] to-[#7fbfe0]'
                : 'bg-linear-to-br from-[#a3cde6] via-[#5caad4] to-[#52a4d2]'
            } ${app.active ? 'w-[54px]' : app.stack ? 'w-[51px]' : 'w-[59px]'}`}
          >
            {app.icon}
          </button>
          {Array.from({ length: app.stack ?? 0 }, (_, i) => (
            <span
              key={i}
              className="h-[39px] w-[4px] rounded-r-[3px] border-r border-[#1c4a70] bg-[#6db2d9] shadow-[inset_-1px_0_0_#b4dbef]"
            />
          ))}
        </div>
      ))}
    </div>
    <div className="flex flex-1 justify-center overflow-hidden">
      <svg viewBox="0 0 100 40" className="ml-[188px] h-[39px] w-[100px] shrink-0" fill="none" aria-hidden="true">
        <g strokeLinecap="round">
          <path d="M9-4Q48 14 80 48" stroke="#74aee8" strokeWidth="17" opacity=".25" />
          <path d="M9-4Q48 14 80 48" stroke="#74aee8" strokeWidth="13" opacity=".5" />
          <path d="M9-4Q48 14 80 48" stroke="#a3cdf4" strokeWidth="9" opacity=".8" />
          <path d="M9-4Q48 14 80 48" stroke="#b3d8f8" strokeWidth="5" />
        </g>
      </svg>
    </div>
    <div className="flex items-center text-white">
      <button aria-label="Show hidden icons" className="mr-[13px]">
        <svg viewBox="0 0 8 5" className="h-[5px] w-2" aria-hidden="true">
          <path d="M0 5h8L4 0z" fill="#fff" />
        </svg>
      </button>
      <Icon className="mr-[10px] size-[15px]">
        <path d="M0 2.500 7 1.500v6H0zM8 1.300 16 0v7.500H8zM0 8.500h7v6l-7-1zM8 8.500h8V16l-8-1.300z" fill="#fff" />
      </Icon>
      <Icon className="mr-[7px] size-[15px]">
        <path d="M1.500 16v-3M4.500 16v-5M7.500 16V8M10.500 16V5M13.500 16V1" stroke="#fff" strokeWidth="2" />
      </Icon>
      <Icon className="mr-[10px] size-[15px]">
        <path d="M4 1v15" stroke="#172028" strokeWidth="1.5" />
        <path d="m5 2 7 3-7 4z" fill="#25e03a" />
      </Icon>
      <Icon className="mr-[16px] size-4">
        <path d="M1 5h3l5-4v14l-5-4H1z" fill="#fff" />
        <path d="M11 5q2 3 0 6M13 3q3.500 5 0 10" stroke="#fff" />
      </Icon>
      <div className="w-[62px] text-center font-['Open_Sans','Noto_Sans',sans-serif] text-[11px] leading-[17px]">
        <div>00:53</div>
        <div>15/06/2015</div>
      </div>
      <button
        aria-label="Show desktop"
        className="ml-[10px] h-[38px] w-[14px] border border-[#6f97ba] bg-linear-to-b from-[#6d8caa] to-[#163e69]"
      />
    </div>
  </footer>
);

const App: React.FC = () => {
  return (
    <div className="flex h-screen flex-col overflow-hidden bg-[#a0a0a0] font-['Liberation_Sans',Arial,sans-serif] text-[11px] leading-[14px] text-black">
      <TitleBar />
      <Toolbar />
      <div className="flex min-h-0 flex-1">
        <Sidebar />
        <main className="relative flex-1">
          <WirelessTables />
          <BandwidthTest />
        </main>
      </div>
      <Taskbar />
    </div>
  );
};

export default App;
